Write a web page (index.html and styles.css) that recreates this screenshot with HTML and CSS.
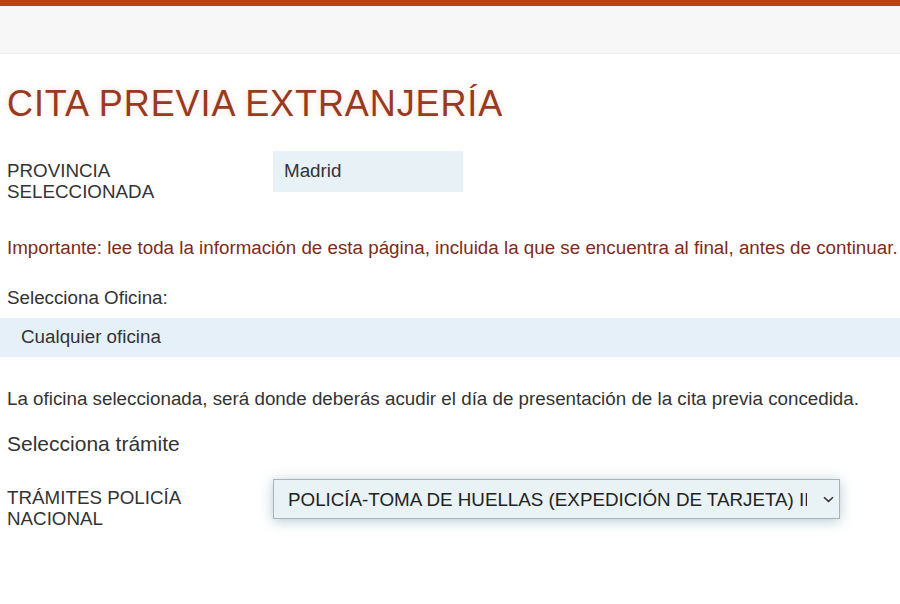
FILE: index.html
```html
<!DOCTYPE html>
<html lang="es">
<head>
  <meta charset="UTF-8">
  <meta name="viewport" content="width=device-width, initial-scale=1.0">
  <title>Cita previa extranjería</title>
  <link rel="stylesheet" href="styles.css">
</head>
<body>
  <div class="top-bar"></div>
  <div class="nav-bar"></div>

  <main class="content">
    <h1>CITA PREVIA EXTRANJERÍA</h1>

    <div class="field-row">
      <div class="field-label">PROVINCIA<br>SELECCIONADA</div>
      <div class="field-value">Madrid</div>
    </div>

    <p class="notice">Importante: lee toda la información de esta página, incluida la que se encuentra al final, antes de continuar.</p>

    <p class="caption">Selecciona Oficina:</p>
    <div class="office-box">Cualquier oficina</div>

    <p class="info">La oficina seleccionada, será donde deberás acudir el día de presentación de la cita previa concedida.</p>

    <h2>Selecciona trámite</h2>

    <div class="field-row procedure-row">
      <label class="field-label" for="tramite">TRÁMITES POLICÍA<br>NACIONAL</label>
      <div class="select-wrap">
        <select id="tramite" name="tramite">
          <option>POLICÍA-TOMA DE HUELLAS (EXPEDICIÓN DE TARJETA) INICIAL, RENOVACIÓN, DUPLICADO Y LEY 14/2013</option>
        </select>
        <svg class="chevron" width="11" height="7" viewBox="0 0 11 7">
          <path d="M1 1.2 L5.5 5.4 L10 1.2" fill="none" stroke="#333" stroke-width="1.5"/>
        </svg>
      </div>
    </div>
  </main>
</body>
</html>
```

FILE: styles.css
```css
body {
  margin: 0;
  font-family: "Liberation Sans", Arial, sans-serif;
  font-size: 18.8px;
  line-height: 21px;
  color: #333;
  background: #fff;
}
.top-bar {
  height: 6px;
  background: #c0410f;
}
.nav-bar {
  height: 47px;
  background: #f7f7f7;
  border-bottom: 1px solid #eeeeee;
}
.content {
  padding: 0 0 40px 7px;
}
h1 {
  margin: 28px 0 0;
  font-size: 36px;
  line-height: 44px;
  letter-spacing: 0.9px;
  font-weight: normal;
  color: #983a22;
  text-shadow: 0 0 6px rgba(230, 150, 110, 0.3);
}
.field-row {
  display: flex;
  align-items: flex-start;
  margin-top: 25px;
}
.field-label {
  width: 266px;
  padding-top: 9px;
  flex-shrink: 0;
}
.field-value {
  width: 179px;
  padding: 9px 0 11px 11px;
  background: #e8f2f6;
}
.notice {
  margin: 35px 0 0;
  color: #7c2c20;
}
.caption {
  margin: 29px 0 0;
}
.office-box {
  margin: 10px 0 0 -7px;
  padding: 8px 0 10px 21px;
  background: #e5f0f8;
}
.info {
  margin: 31px 0 0;
}
h2 {
  margin: 22px 0 0;
  font-size: 21px;
  line-height: 25px;
  font-weight: normal;
}
.procedure-row {
  margin-top: 23px;
}
.procedure-row .field-label {
  padding-top: 8px;
}
.select-wrap {
  position: relative;
  width: 567px;
  box-shadow: 0 2px 12px rgba(90, 140, 160, 0.45);
}
.select-wrap select {
  display: block;
  width: 100%;
  height: 40px;
  padding: 0 32px 0 14px;
  border: 1px solid #aab4b8;
  background: #e9f2f5;
  font-family: inherit;
  font-size: 18.8px;
  color: #222;
  appearance: none;
  -webkit-appearance: none;
  border-radius: 0;
}
.chevron {
  position: absolute;
  right: 6px;
  top: 17px;
  pointer-events: none;
}
```
